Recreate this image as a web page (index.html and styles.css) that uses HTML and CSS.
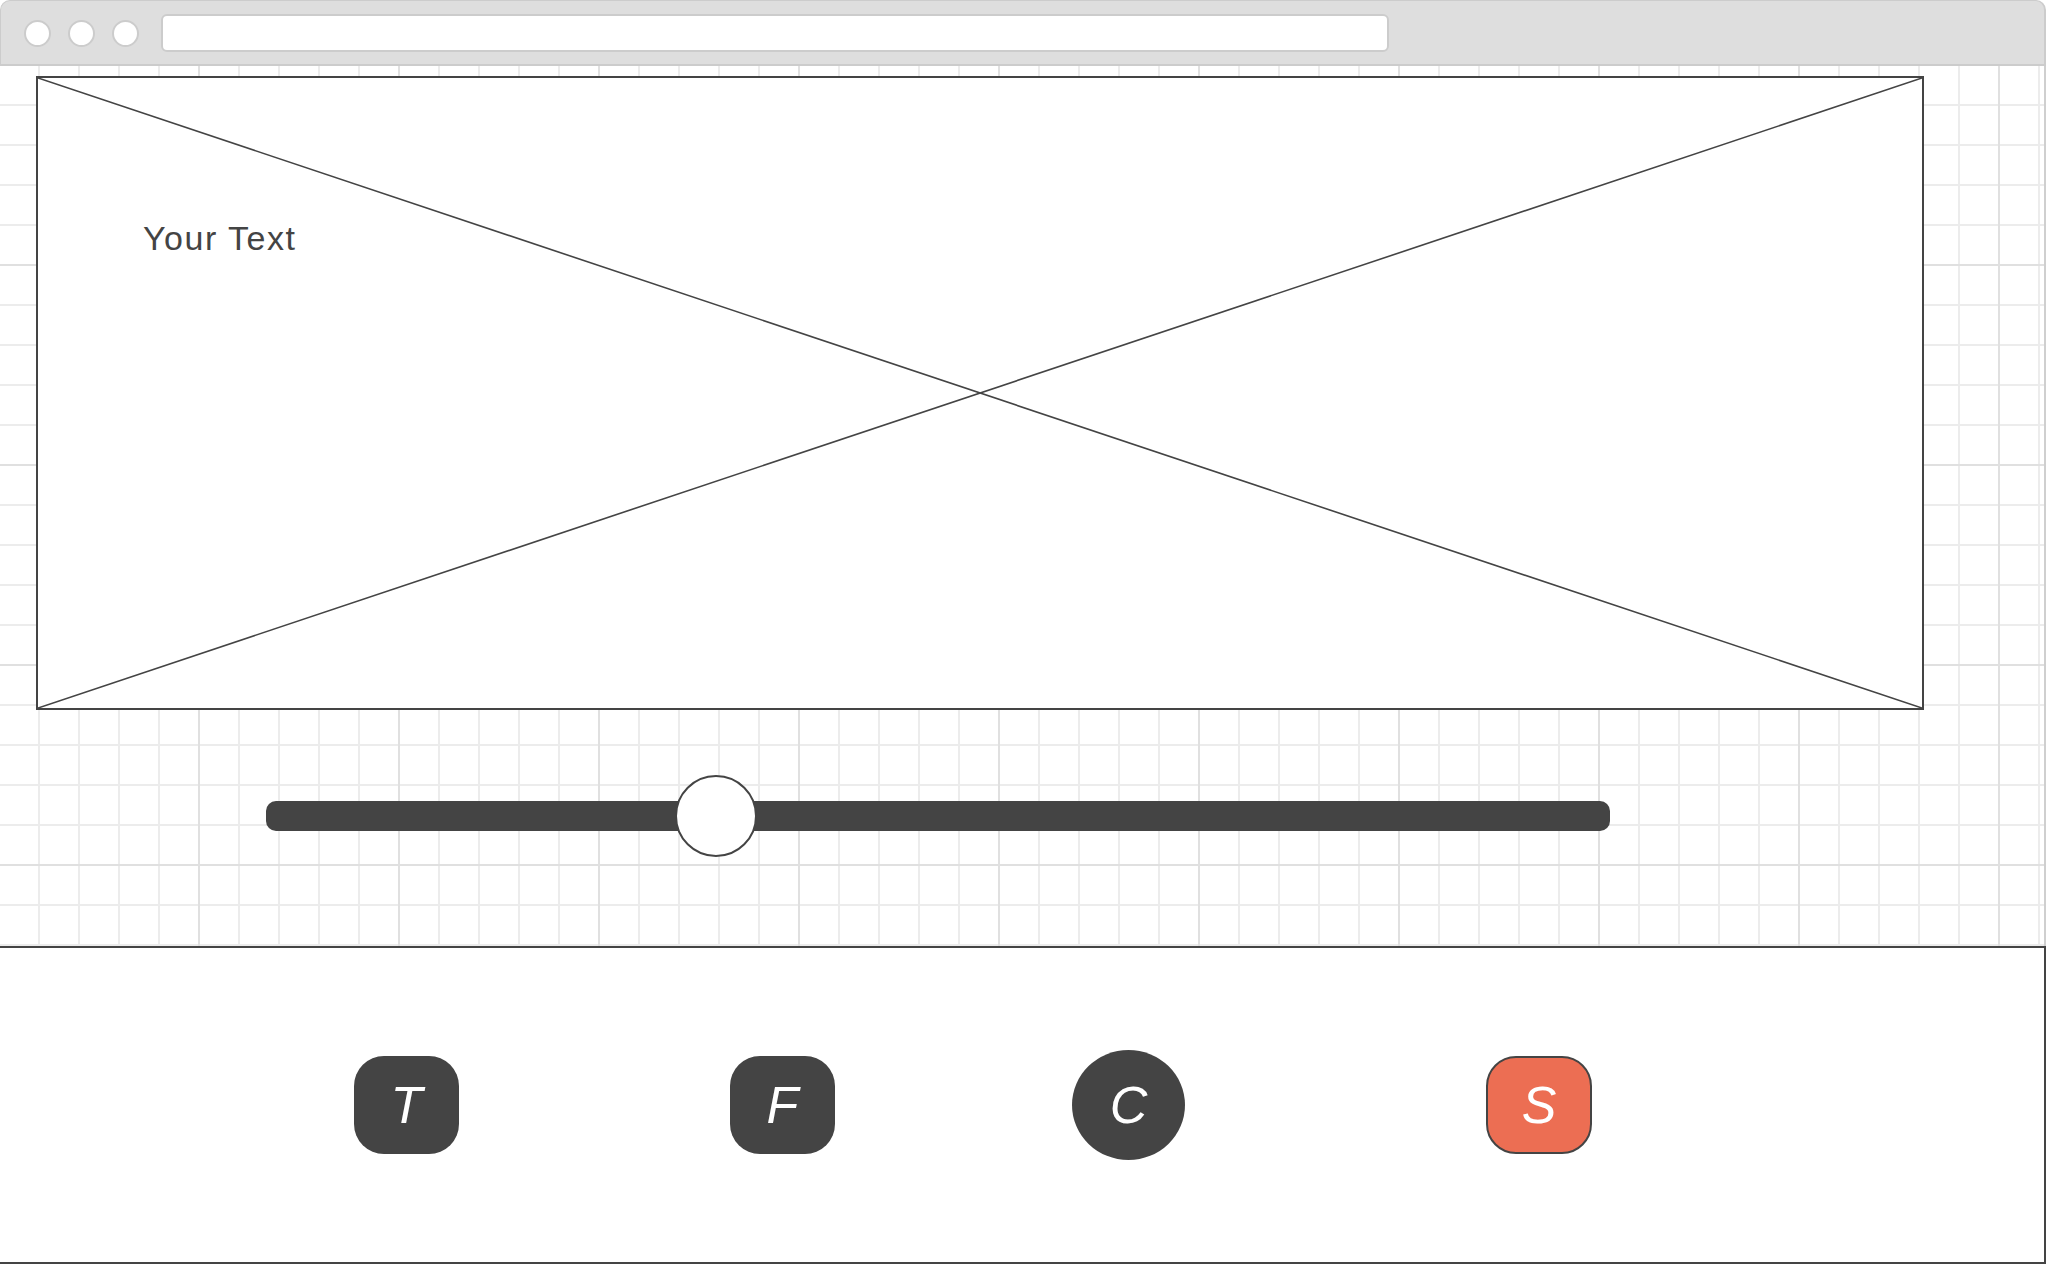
FILE: index.html
```html
<!DOCTYPE html>
<html lang="en">
<head>
<meta charset="utf-8">
<title>Wireframe</title>
<link rel="stylesheet" href="styles.css">
</head>
<body>
<div class="window">
  <div class="toolbar">
    <span class="dot"></span>
    <span class="dot"></span>
    <span class="dot"></span>
    <div class="url"></div>
  </div>
  <div class="canvas">
    <div class="image-box">
      <svg class="cross" viewBox="0 0 100 100" preserveAspectRatio="none" aria-hidden="true">
        <line x1="0" y1="0" x2="100" y2="100" vector-effect="non-scaling-stroke"/>
        <line x1="100" y1="0" x2="0" y2="100" vector-effect="non-scaling-stroke"/>
      </svg>
      <span class="caption">Your Text</span>
    </div>
    <div class="slider">
      <div class="track"></div>
      <div class="thumb"></div>
    </div>
  </div>
  <div class="panel">
    <div class="btn btn-t">T</div>
    <div class="btn btn-f">F</div>
    <div class="btn btn-c">C</div>
    <div class="btn btn-s">S</div>
  </div>
</div>
</body>
</html>
```

FILE: styles.css
```css
html, body {
  margin: 0;
  padding: 0;
  background: #ffffff;
  overflow: hidden;
}

.window {
  width: 2046px;
  height: 1264px;
  display: flex;
  flex-direction: column;
  font-family: "Liberation Sans", Arial, sans-serif;
}

.toolbar {
  box-sizing: border-box;
  height: 66px;
  flex: none;
  background: #dedede;
  border: 1px solid #cccccc;
  border-right-width: 2px;
  border-bottom-width: 2px;
  border-radius: 10px 10px 0 0;
  display: flex;
  align-items: center;
  padding: 1px 0 0 23px;
}

.dot {
  box-sizing: border-box;
  width: 27px;
  height: 27px;
  border-radius: 50%;
  background: #ffffff;
  border: 2px solid #cccccc;
  margin-right: 17px;
  flex: none;
}

.url {
  box-sizing: border-box;
  margin-left: 5px;
  width: 1228px;
  height: 38px;
  background: #ffffff;
  border: 2px solid #cccccc;
  border-radius: 6px;
}

.canvas {
  box-sizing: border-box;
  height: 880px;
  flex: none;
  padding: 10px 0 0 36px;
  border-right: 2px solid #cfcfcf;
  background-color: #ffffff;
  background-image:
    linear-gradient(to right, transparent 198px, #e0e0e0 198px),
    linear-gradient(to bottom, transparent 198px, #e0e0e0 198px),
    linear-gradient(to right, transparent 38px, #ececec 38px),
    linear-gradient(to bottom, transparent 38px, #ececec 38px);
  background-size: 200px 200px, 200px 200px, 40px 40px, 40px 40px;
  background-position: 0 0;
}

.image-box {
  position: relative;
  box-sizing: border-box;
  width: 1888px;
  height: 634px;
  background: #ffffff;
  border: 2px solid #444444;
  padding: 143px 0 0 105px;
}

.cross {
  position: absolute;
  inset: 0;
  width: 100%;
  height: 100%;
}

.cross line {
  stroke: #444444;
  stroke-width: 1.6;
}

.caption {
  position: relative;
  display: inline-block;
  font-size: 34px;
  line-height: 34px;
  letter-spacing: 1.5px;
  color: #444444;
}

.slider {
  position: relative;
  width: 1344px;
  height: 82px;
  margin: 65px 0 0 230px;
  display: flex;
  align-items: center;
}

.track {
  width: 100%;
  height: 30px;
  background: #444444;
  border-radius: 10px;
}

.thumb {
  position: absolute;
  box-sizing: border-box;
  left: 409px;
  top: 0;
  width: 82px;
  height: 82px;
  border-radius: 50%;
  background: #ffffff;
  border: 2px solid #444444;
}

.panel {
  box-sizing: border-box;
  height: 318px;
  flex: none;
  background: #ffffff;
  border: 2px solid #444444;
  border-left: none;
  display: flex;
  align-items: center;
  padding: 0 0 0 354px;
}

.btn {
  box-sizing: border-box;
  flex: none;
  display: flex;
  align-items: center;
  justify-content: center;
  color: #ffffff;
  font-style: italic;
  font-size: 52px;
  line-height: 1;
  background: #444444;
  width: 105px;
  height: 98px;
  border-radius: 30px;
}

.btn-f {
  margin-left: 271px;
}

.btn-c {
  margin-left: 237px;
  width: 113px;
  height: 110px;
  border-radius: 50%;
}

.btn-s {
  margin-left: 301px;
  width: 106px;
  background: #ec6e53;
  border: 2px solid #444444;
}
```
